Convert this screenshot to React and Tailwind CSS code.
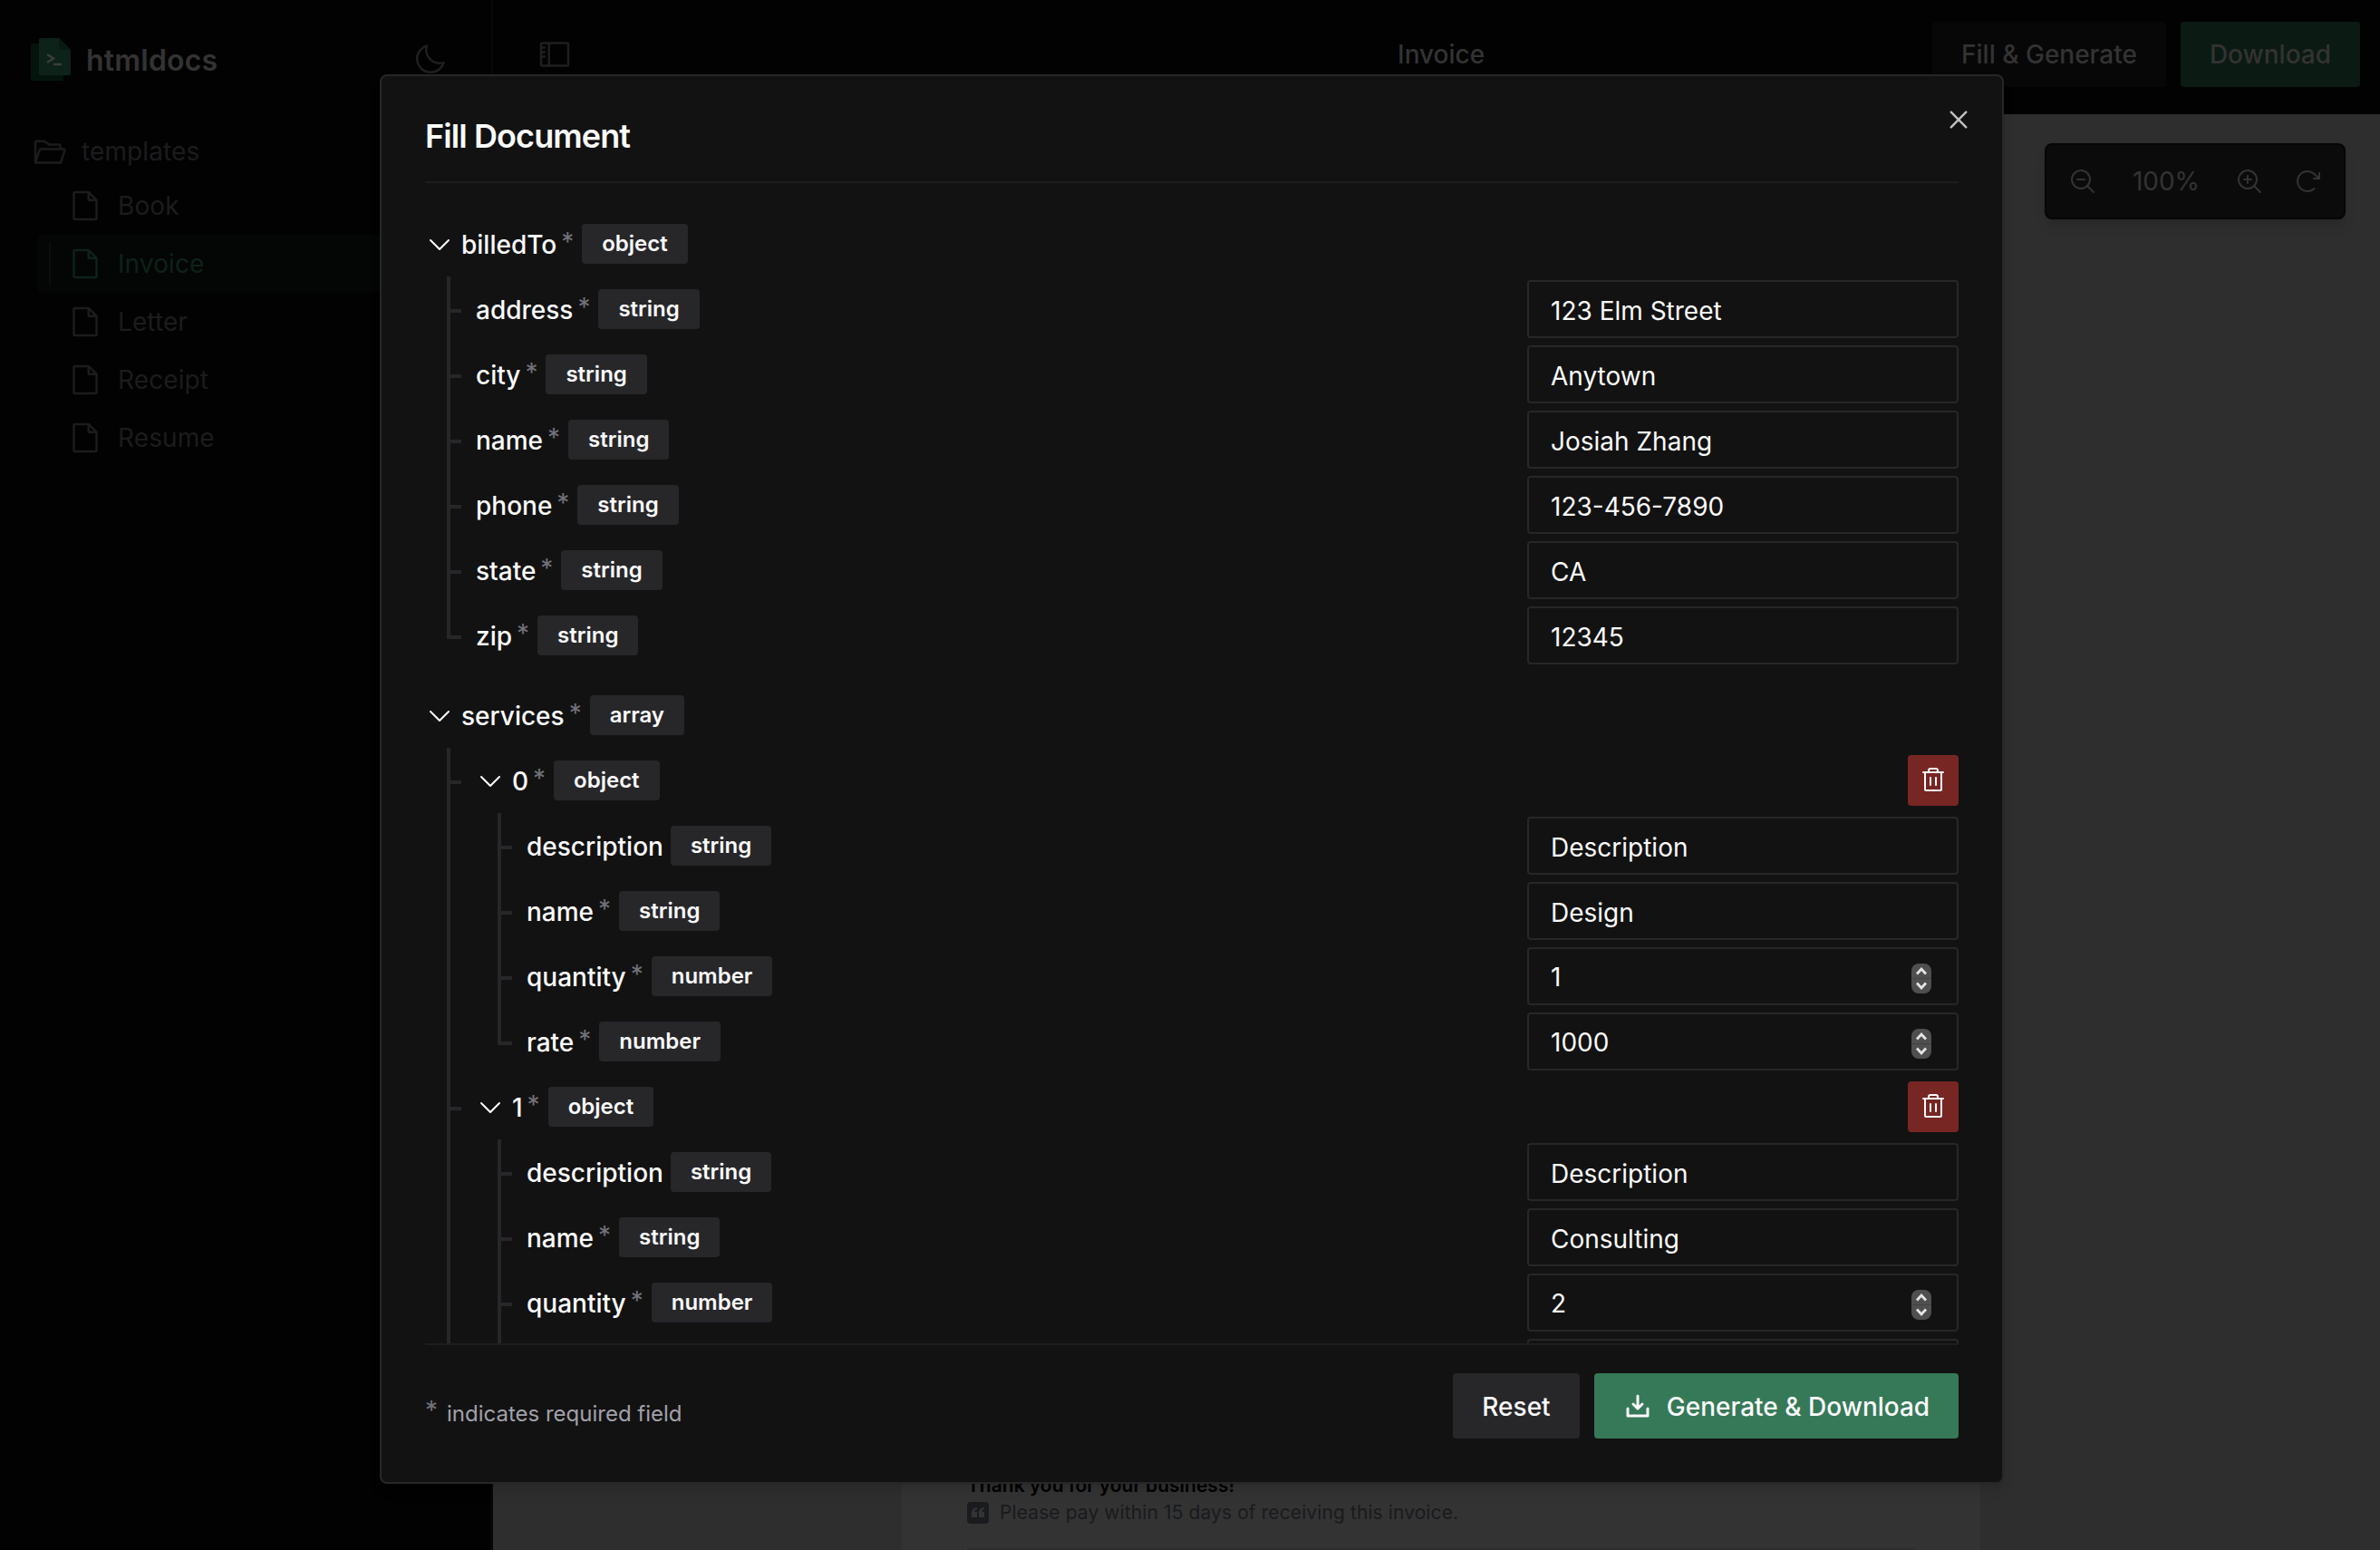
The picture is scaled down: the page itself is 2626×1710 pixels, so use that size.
import React from 'react';
import {
  PiArrowClockwise,
  PiCaretDown,
  PiDownloadSimpleBold,
  PiFile,
  PiFolderOpen,
  PiMagnifyingGlassMinus,
  PiMagnifyingGlassPlus,
  PiMoon,
  PiSidebar,
  PiTrash
} from 'react-icons/pi';
import { RxCross2 } from 'react-icons/rx';

const TEMPLATES = ['Book', 'Invoice', 'Letter', 'Receipt', 'Resume'];

const serviceFields = (name, quantity, rate) => [
  { name: 'description', type: 'string', value: 'Description', optional: true },
  { name: 'name', type: 'string', value: name },
  { name: 'quantity', type: 'number', value: quantity },
  { name: 'rate', type: 'number', value: rate }
];

const SCHEMA = [
  {
    name: 'billedTo',
    type: 'object',
    children: [
      { name: 'address', type: 'string', value: '123 Elm Street' },
      { name: 'city', type: 'string', value: 'Anytown' },
      { name: 'name', type: 'string', value: 'Josiah Zhang' },
      { name: 'phone', type: 'string', value: '123-456-7890' },
      { name: 'state', type: 'string', value: 'CA' },
      { name: 'zip', type: 'string', value: '12345' }
    ]
  },
  {
    name: 'services',
    type: 'array',
    children: [
      { name: '0', type: 'object', removable: true, children: serviceFields('Design', '1', '1000') },
      { name: '1', type: 'object', removable: true, children: serviceFields('Consulting', '2', '') }
    ]
  }
];

const Logo = () => (
  <svg width="44" height="48" viewBox="0 0 44 48" fill="none">
    <path d="M2 6h34v39a2 2 0 0 1-2 2H2a2 2 0 0 1-2-2V8a2 2 0 0 1 2-2Z" fill="#04140d" />
    <path d="M11 0h20l13 13v26a2 2 0 0 1-2 2H11a2 2 0 0 1-2-2V2a2 2 0 0 1 2-2Z" fill="#0d2219" />
    <path d="M31 0l13 13H33a2 2 0 0 1-2-2V0Z" fill="#081b12" />
    <path d="M18 18l7 4.500-7 4.500" stroke="#3a3d3b" strokeWidth="2.6" />
    <path d="M25 29h9" stroke="#3a3d3b" strokeWidth="2.6" />
  </svg>
);

const Sidebar = () => (
  <aside className="flex w-[544px] shrink-0 flex-col border-r-2 border-[#080808] bg-[#020202]">
    <div className="flex h-[132px] items-center pl-[34px] pr-[48px]">
      <Logo />
      <span className="ml-[17px] pt-0.5 text-[32px] font-semibold tracking-[0.2px] text-[#333333]">
        htmldocs
      </span>
      <PiMoon className="ml-auto size-10 text-[#1f1f20]" />
    </div>
    <div className="flex h-[63px] items-center gap-4 pl-[34px] pt-1.5 text-[#1c1c1e]">
      <PiFolderOpen className="size-10" />
      <span className="text-[28px] tracking-[0.1px]">templates</span>
    </div>
    <nav className="flex flex-col pl-[42px] text-[#1c1c1e]">
      {TEMPLATES.map((name) =>
        name === 'Invoice' ? (
          <div key={name} className="flex h-16 items-center bg-[#030605] pl-3 text-[#0d2219]">
            <span className="mr-[18px] h-12 w-0.5 bg-[#0b0e0d]" />
            <PiFile className="size-10" />
            <span className="ml-4 text-[28px] tracking-[0.1px]">{name}</span>
          </div>
        ) : (
          <div key={name} className="flex h-16 items-center pl-8">
            <PiFile className="size-10" />
            <span className="ml-4 text-[28px] tracking-[0.1px]">{name}</span>
          </div>
        )
      )}
    </nav>
  </aside>
);

const Header = () => (
  <header className="flex h-[126px] items-start bg-[#020202] pl-12 pr-[22px] pt-6 text-[28px] font-medium text-[#333333]">
    <div className="flex h-[72px] w-[950px] items-center">
      <PiSidebar className="size-10 text-[#1f1f20]" />
    </div>
    <div className="flex h-[72px] items-center">Invoice</div>
    <div className="ml-auto flex gap-4">
      <div className="flex h-[72px] w-[258px] items-center justify-center rounded bg-[#070707]">
        Fill &amp; Generate
      </div>
      <div className="flex h-[72px] w-[198px] items-center justify-center rounded bg-[#0b1a12]">
        Download
      </div>
    </div>
  </header>
);

const Preview = () => (
  <main className="relative flex grow justify-start overflow-hidden bg-[#2e2e2e] pl-[451px]">
    <div className="flex w-[1190px] flex-col justify-end bg-[#333333] px-[72px]">
      <p className="text-[21px] font-semibold leading-7 text-black">Thank you for your business!</p>
      <div className="mt-1 flex h-6 items-center">
        <span className="flex size-6 items-center justify-center rounded bg-[#191b1e]">
          <svg width="14" height="12" viewBox="0 0 14 12" fill="#333333">
            <path d="M6 0v2C4.500 2.300 3.600 3.300 3.500 5H6v6H0V5.500C0 2.500 2 .4 6 0ZM14 0v2c-1.500.3-2.400 1.300-2.500 3H14v6H8V5.500C8 2.500 10 .4 14 0Z" />
          </svg>
        </span>
        <span className="ml-3 text-[21px] tracking-[0.1px] text-[#191a1d]">
          Please pay within 15 days of receiving this invoice.
        </span>
      </div>
      <div className="mt-[27px] h-0.5 bg-[#2c2c2c]" />
    </div>
    <div className="absolute right-[38px] top-8 flex h-[84px] w-[332px] items-center rounded-lg border-2 border-[#060606] bg-[#0b0b0b] pl-6 text-[#333333] shadow-lg">
      <PiMagnifyingGlassMinus className="size-8" />
      <span className="w-[152px] text-center text-[28px]">100%</span>
      <PiMagnifyingGlassPlus className="size-8" />
      <PiArrowClockwise className="ml-8 size-8" />
    </div>
  </main>
);

const Spinner = () => (
  <svg width="22" height="33" viewBox="0 0 22 33" fill="none" className="mt-1">
    <rect width="22" height="33" rx="8" fill="#4f4f4f" />
    <path d="M0 16.500h22" stroke="#434343" />
    <path d="M6 11.500l5-5.500 5 5.500M6 21.500l5 5.500 5-5.500" stroke="#e4e4e4" strokeWidth="2.800" />
  </svg>
);

const Field = ({ field }) => (
  <div className="flex h-16 w-[476px] items-center justify-between rounded border-2 border-[#27272a] pl-6 pr-7 text-[28px] text-[#fafafa]">
    <span className={field.type === 'number' ? 'pt-0.5' : 'pt-1'}>{field.value}</span>
    {field.type === 'number' && <Spinner />}
  </div>
);

const Asterisk = () => (
  <span className="-ml-0.5 mr-0.5 flex h-9 w-3 justify-center text-[28px] leading-[32px] text-[#71717a]">*</span>
);

const Label = ({ node }) => (
  <div className="flex items-center gap-2">
    <span className="pt-0.5 text-[28px] font-medium text-[#fafafa]">{node.name}</span>
    {!node.optional && <Asterisk />}
    <span className="flex h-11 items-center rounded bg-[#27272a] px-[22px] text-2xl font-semibold text-[#fafafa]">
      {node.type}
    </span>
  </div>
);

const Node = ({ node }) => {
  if (!node.children) {
    return (
      <div className="flex h-[72px] items-center justify-between">
        <Label node={node} />
        <Field field={node} />
      </div>
    );
  }

  return (
    <div>
      <div className="flex h-[72px] items-center">
        <PiCaretDown className="mr-2 size-8 text-[#fafafa]" />
        <Label node={node} />
        {node.removable && (
          <span className="ml-auto flex size-14 items-center justify-center rounded bg-[#772624]">
            <PiTrash className="size-8 text-[#fafafa]" />
          </span>
        )}
      </div>
      <div className="ml-6">
        {node.children.map((child, index) => {
          const last = index === node.children.length - 1;
          return (
            <div key={child.name} className="flex">
              {/* trunk and branch of the tree guide */}
              <div className="flex w-8 shrink-0">
                <div className={last && !child.children ? 'h-10 w-1 bg-[#27272a]' : 'w-1 bg-[#27272a]'} />
                <div className="mt-9 h-1 w-3 bg-[#27272a]" />
              </div>
              <div className="grow">
                <Node node={child} />
              </div>
            </div>
          );
        })}
      </div>
    </div>
  );
};

const FillDialog = () => (
  <div className="absolute left-[419px] top-[82px] flex h-[1555px] w-[1792px] flex-col rounded-lg border-2 border-[#27272a] bg-[#121212] p-12 shadow-lg">
    <div className="flex h-[70px] shrink-0 items-start border-b-2 border-[#1d1d1f]">
      <h2 className="text-4xl font-semibold leading-9 tracking-tight text-[#fafafa]">Fill Document</h2>
    </div>
    <div className="flex min-h-0 grow flex-col gap-4 overflow-hidden pt-[31px]">
      {SCHEMA.map((node) => (
        <Node key={node.name} node={node} />
      ))}
    </div>
    <div className="flex shrink-0 items-center gap-4 border-t-2 border-[#1d1d1f] pt-[31px] text-[28px] font-medium text-[#fafafa]">
      <div className="mr-auto flex items-center gap-2.5 pt-4 text-2xl font-normal text-[#a1a1aa]">
        <span className="flex h-9 w-3.5 justify-center text-[28px] leading-[30px] text-[#71717a]">*</span>
        <span className="pt-px">indicates required field</span>
      </div>
      <div className="flex h-[72px] w-[140px] items-center justify-center rounded bg-[#27272a] pt-0.5">
        Reset
      </div>
      <div className="flex h-[72px] w-[402px] items-center justify-center gap-4 rounded bg-[#367958] pt-0.5">
        <PiDownloadSimpleBold className="size-8" />
        <span>Generate &amp; Download</span>
      </div>
    </div>
    <RxCross2 className="absolute right-8 top-8 size-8 text-[#c0c0c0]" />
  </div>
);

const App = () => (
  <div className="relative flex h-[1710px] w-[2626px] overflow-hidden bg-[#020202] font-['Inter',sans-serif]">
    <Sidebar />
    <div className="flex grow flex-col">
      <Header />
      <Preview />
    </div>
    <FillDialog />
  </div>
);

export default App;
